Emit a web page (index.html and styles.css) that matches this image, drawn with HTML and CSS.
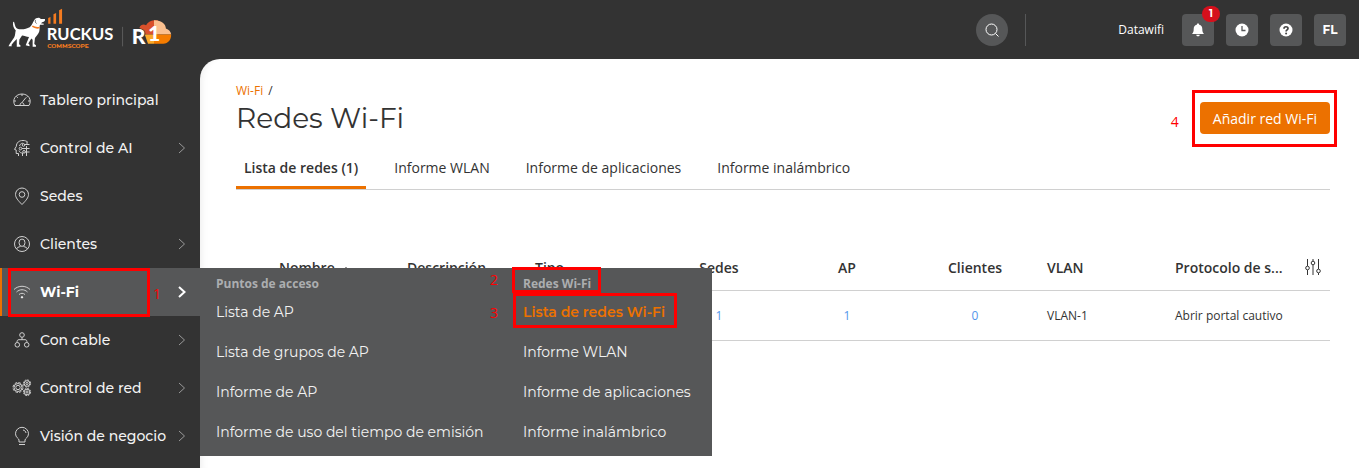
FILE: index.html
```html
<!DOCTYPE html>
<html lang="es">
<head>
    <meta charset="UTF-8">
    <meta name="viewport" content="width=device-width, initial-scale=1.0">
    <title>Redes Wi-Fi - RUCKUS One</title>
    <link rel="stylesheet" href="styles.css">
</head>
<body>
    <header class="topbar">
        <a href="#" class="logo" aria-label="RUCKUS One">
            <svg viewBox="24 24 496 124" width="165" height="41">
                <!-- perro -->
                <path fill="#fff" d="M38 66 C41 65 42 69 43 74 C45 84 50 89 58 88 C70 89 80 86 88 82 C95 77 97 68 102 60 C105 55 112 53 118 54 L122 57 L134 57 C136 61 133 66 126 67 L122 70 L131 72 L130 75 L119 75 C117 82 119 88 117 95 C114 104 107 109 104 115 L102 133 L107 137 L107 141 L97 141 L97 120 L93 116 L84 131 L88 136 L87 140 L76 137 L86 112 C78 111 72 108 65 107 L57 119 L56 134 L60 137 L60 141 L49 141 L49 118 L38 129 L33 136 L34 140 L24 140 L28 132 L41 113 C45 106 44 98 46 92 C40 86 36 75 38 66 Z"/>
                <path stroke="#333" stroke-width="2" fill="none" d="M106 60 C104 64 105 69 109 71"/>
                <path stroke="#f47b20" stroke-width="5" fill="none" d="M96 79 Q106 86 118 83"/>
                <path fill="#f47b20" d="M144 54 L151 51 V72 H144 Z M160 43 L168 39 V72 H160 Z M177 31 L186 26 V72 H177 Z"/>
                <text x="140" y="120" class="logo-name">RUCKUS</text>
                <circle cx="338" cy="88" r="2" fill="#ccc"/>
                <text x="141" y="144" class="logo-owner">COMMSCOPE</text>
                <path stroke="#5c5c5c" stroke-width="3" d="M369 81 V140"/>
                <!-- nube -->
                <path fill="#d9502b" d="M420 84 C423 75 432 72 440 76 C445 67 454 62 464 61 H476 V104 H440 Z"/>
                <path fill="#fbc08f" d="M464 61 C485 60 500 72 500 86 C509 89 515 96 516 104 H464 Z"/>
                <path fill="#f57c00" d="M464 104 H516 C516 120 507 131 492 132 H464 Z"/>
                <path fill="#fba928" d="M436 104 H464 V132 H446 Z"/>
                <text x="397" y="132" class="logo-r">R</text>
                <text x="446" y="123" class="logo-one">1</text>
            </svg>
        </a>
        <div class="tools">
            <button class="search" aria-label="Buscar">
                <svg viewBox="0 0 16 16" width="16" height="16" fill="none" stroke="#fff"><circle cx="7.500" cy="7.500" r="5.500"/><path d="M11.500 11.500l3 3"/></svg>
            </button>
            <span class="divider"></span>
            <span class="account">Datawifi</span>
            <button class="tool" aria-label="Alarmas">
                <svg viewBox="0 0 16 16" width="16" height="16" fill="#fff"><path d="M8 1.500c.8 0 1.200.5 1.200 1.200C11.400 3.200 12.300 5 12.300 7c0 2.500.5 3.500 1.700 5H2c1.200-1.500 1.700-2.500 1.700-5 0-2 .9-3.800 3.100-4.300 0-.7.400-1.200 1.200-1.200zM6.300 12.800h3.400c0 1-.7 1.500-1.700 1.500s-1.700-.5-1.700-1.500z"/></svg>
                <span class="badge">1</span>
            </button>
            <button class="tool" aria-label="Actividades">
                <svg viewBox="0 0 16 16" width="16" height="16"><circle cx="8" cy="8" r="6.500" fill="#fff"/><path d="M8 4v4.500h3.500" fill="none" stroke="#565758" stroke-width="1.300"/></svg>
            </button>
            <button class="tool" aria-label="Ayuda">
                <svg viewBox="0 0 16 16" width="16" height="16"><circle cx="8" cy="8" r="6.500" fill="#fff"/><path d="M6 6.700c0-2.600 4-2.500 4-.2 0 1.400-1.900 1.400-1.900 3" fill="none" stroke="#444" stroke-width="1.700"/><circle cx="8.100" cy="11.500" r="1" fill="#444"/></svg>
            </button>
            <button class="tool">FL</button>
        </div>
    </header>

    <div class="layout">
        <nav class="sidebar">
            <ul class="menu">
                <li>
                    <a href="#" class="menu-item">
                        <svg class="icon" viewBox="0 0 20 20"><path d="M3 15.500C-.5 9.500 4 4 10 4s10.500 5.500 7 11.500zM2 11h2M16 11h2M4.500 6.500l1.300 1.300M10 4v2M15.500 6.500l-.8.800M14 7.500l-4 5M8 15c0-3 4-3 4 0"/></svg>
                        Tablero principal
                    </a>
                </li>
                <li>
                    <a href="#" class="menu-item">
                        <svg class="icon" viewBox="0 0 20 20"><path d="M6.500 18v-2.500H4.200V12l-1.700-.6 1.800-3C4.500 4.500 7 2.500 11 2.500c2 0 3.500.6 4.500 1.500M10 10.500h7.500M12.500 6.500h5M13 14h4.500M10.500 18v-3M14.500 18V8M15 3.500v3M7.500 8c1-3 3-3 4-2.500M7 12.500c.5 2 2 2.500 3.500 2.500"/><circle cx="11.500" cy="7" r="1.300"/><circle cx="8.500" cy="10.500" r="1.300"/><circle cx="12" cy="13.800" r="1.300"/></svg>
                        Control de AI
                        <svg class="arrow" viewBox="0 0 8 12"><path d="M1 1l5.500 5L1 11"/></svg>
                    </a>
                </li>
                <li>
                    <a href="#" class="menu-item">
                        <svg class="icon" viewBox="0 0 20 20"><path d="M10 18.500C6 14.500 3.500 11.500 3.500 8.500a6.500 6.500 0 0 1 13 0c0 3-2.500 6-6.500 10z"/><circle cx="10" cy="8.500" r="2.800"/></svg>
                        Sedes
                    </a>
                </li>
                <li>
                    <a href="#" class="menu-item">
                        <svg class="icon" viewBox="0 0 20 20"><circle cx="10" cy="10" r="7.500"/><ellipse cx="10" cy="8.700" rx="3" ry="3.700"/><path d="M4.500 15c.5-1.500 2-2 4-2.500M15.500 15c-.5-1.500-2-2-4-2.500"/></svg>
                        Clientes
                        <svg class="arrow" viewBox="0 0 8 12"><path d="M1 1l5.500 5L1 11"/></svg>
                    </a>
                </li>
                <li class="active">
                    <a href="#" class="menu-item">
                        <svg class="icon" viewBox="0 0 20 20"><path d="M2 7.500c4.500-4.300 11.500-4.300 16 0M4.500 10c3.200-3 7.800-3 11 0M7 12.500c2-1.600 4-1.600 6 0"/><circle cx="10" cy="15.300" r=".7" fill="#fff" stroke="#fff"/></svg>
                        Wi-Fi
                        <svg class="arrow" viewBox="0 0 8 12"><path d="M1 1l5.500 5L1 11"/></svg>
                    </a>
                    <span class="mark mark-menu"></span>
                    <span class="step step-menu">1</span>

                    <div class="flyout">
                        <div class="flyout-col">
                            <h2>Puntos de acceso</h2>
                            <a href="#">Lista de AP</a>
                            <a href="#">Lista de grupos de AP</a>
                            <a href="#">Informe de AP</a>
                            <a href="#">Informe de uso del tiempo de emisión</a>
                        </div>
                        <div class="flyout-col">
                            <h2>Redes Wi-Fi<span class="mark mark-group"></span><span class="step step-group">2</span></h2>
                            <a href="#" class="selected">Lista de redes Wi-Fi<span class="mark mark-list"></span><span class="step step-list">3</span></a>
                            <a href="#">Informe WLAN</a>
                            <a href="#">Informe de aplicaciones</a>
                            <a href="#">Informe inalámbrico</a>
                        </div>
                    </div>
                </li>
                <li>
                    <a href="#" class="menu-item">
                        <svg class="icon" viewBox="0 0 20 20"><circle cx="10" cy="5" r="2.300"/><circle cx="5.300" cy="14.800" r="2.300"/><circle cx="14.700" cy="14.800" r="2.300"/><path d="M10 7.300v2.400M5 12.500c0-2 .5-2.800 2-2.800h6c1.500 0 2 .8 2 2.800"/></svg>
                        Con cable
                        <svg class="arrow" viewBox="0 0 8 12"><path d="M1 1l5.500 5L1 11"/></svg>
                    </a>
                </li>
                <li>
                    <a href="#" class="menu-item">
                        <svg class="icon" viewBox="0 0 20 20"><circle cx="6" cy="9.500" r="2.200"/><circle cx="6" cy="9.500" r="4" /><circle cx="6" cy="9.500" r="5" stroke-dasharray="2.600 1.300"/><circle cx="15" cy="5.500" r="1.100"/><circle cx="15" cy="5.500" r="2.800"/><circle cx="15" cy="5.500" r="3.600" stroke-dasharray="1.800 1"/><circle cx="15" cy="14" r="1.100"/><circle cx="15" cy="14" r="2.800"/><circle cx="15" cy="14" r="3.600" stroke-dasharray="1.800 1"/></svg>
                        Control de red
                        <svg class="arrow" viewBox="0 0 8 12"><path d="M1 1l5.500 5L1 11"/></svg>
                    </a>
                </li>
                <li>
                    <a href="#" class="menu-item">
                        <svg class="icon" viewBox="0 0 20 20"><path d="M7 16v-2c0-1.500-3.500-2.500-3.500-6.200a6.500 6.500 0 0 1 13 0c0 3.700-3.500 4.700-3.500 6.200v2zM7 18.500h6M11 4c1.800.3 2.800 1.500 3 3"/></svg>
                        Visión de negocio
                        <svg class="arrow" viewBox="0 0 8 12"><path d="M1 1l5.500 5L1 11"/></svg>
                    </a>
                </li>
            </ul>
        </nav>

        <main class="content">
            <div class="page-header">
                <div>
                    <div class="breadcrumb"><a href="#">Wi-Fi</a><span>/</span></div>
                    <h1>Redes Wi-Fi</h1>
                </div>
                <div class="action">
                    <button class="add-button">Añadir red Wi-Fi</button>
                    <span class="mark mark-action"></span>
                    <span class="step step-action">4</span>
                </div>
            </div>

            <div class="tabs">
                <a href="#" class="tab current">Lista de redes (1)</a>
                <a href="#" class="tab">Informe WLAN</a>
                <a href="#" class="tab">Informe de aplicaciones</a>
                <a href="#" class="tab">Informe inalámbrico</a>
            </div>

            <table class="networks">
                <colgroup>
                    <col class="col-edge"><col><col><col><col><col><col><col><col><col class="col-edge">
                </colgroup>
                <thead>
                    <tr>
                        <th></th>
                        <th>Nombre <svg class="sort" viewBox="0 0 8 5"><path d="M4 0l4 5H0z"/></svg></th>
                        <th>Descripción</th>
                        <th>Tipo</th>
                        <th class="num">Sedes</th>
                        <th class="num">AP</th>
                        <th class="num">Clientes</th>
                        <th>VLAN</th>
                        <th>Protocolo de s...</th>
                        <th class="settings">
                            <button aria-label="Columnas">
                                <svg viewBox="0 0 20 20" width="20" height="20" fill="none" stroke="#333"><path d="M4.500 2v7M4.500 13v5M10 2v2M10 8v10M15.500 2v10M15.500 16v2"/><circle cx="4.500" cy="11" r="1.800"/><circle cx="10" cy="6" r="1.800"/><circle cx="15.500" cy="14" r="1.800"/></svg>
                            </button>
                        </th>
                    </tr>
                </thead>
                <tbody>
                    <tr>
                        <td></td>
                        <td></td>
                        <td></td>
                        <td></td>
                        <td class="num"><a href="#">1</a></td>
                        <td class="num"><a href="#">1</a></td>
                        <td class="num"><a href="#">0</a></td>
                        <td>VLAN-1</td>
                        <td>Abrir portal cautivo</td>
                        <td></td>
                    </tr>
                </tbody>
            </table>
        </main>
    </div>
</body>
</html>
```
FILE: styles.css
```css
* {
    box-sizing: border-box;
}
body {
    margin: 0;
    min-height: 100vh;
    display: flex;
    flex-direction: column;
    background-color: #333333;
    color: #333333;
    font-family: 'Open Sans', sans-serif;
    font-size: 14px;
}
a {
    color: inherit;
    text-decoration: none;
}
button {
    padding: 0;
    border: none;
    font-family: inherit;
    cursor: pointer;
}
.topbar {
    height: 59px;
    padding: 0 13px 0 8px;
    display: flex;
    justify-content: space-between;
    align-items: center;
}
.logo {
    margin-bottom: 2px;
}
.logo svg {
    display: block;
}
.logo-name {
    fill: #ffffff;
    font: 700 50px Lato, sans-serif;
}
.logo-owner {
    fill: #f47b20;
    font: 700 18px Montserrat, Inter, sans-serif;
}
.logo-r, .logo-one {
    fill: #ffffff;
    font: 900 64px Lato, sans-serif;
}
.logo-r {
    stroke: #333333;
    stroke-width: 4px;
    paint-order: stroke;
}
.tools {
    display: flex;
    align-items: center;
    gap: 12px;
    color: #ffffff;
}
.search, .tool {
    width: 32px;
    height: 32px;
    display: flex;
    justify-content: center;
    align-items: center;
    background-color: #565758;
    color: #ffffff;
}
.search {
    border-radius: 50%;
}
.tool {
    position: relative;
    border-radius: 4px;
    font-family: Montserrat, Inter, sans-serif;
    font-size: 12px;
    font-weight: 700;
}
.divider {
    width: 1px;
    height: 32px;
    margin: 0 80px 0 5px;
    background-color: #565758;
}
.account {
    margin-right: 6px;
    font-size: 12px;
}
.badge {
    position: absolute;
    top: -8px;
    right: -6px;
    min-width: 18px;
    border-radius: 8px;
    background-color: #d5101c;
    font-size: 10px;
    line-height: 16px;
    text-align: center;
}
.layout {
    flex: 1;
    display: flex;
}
.sidebar {
    width: 200px;
    flex-shrink: 0;
}
.menu {
    margin: 0;
    padding: 17px 0 8px;
    list-style: none;
    color: #f2f2f2;
    font-family: Montserrat, Inter, sans-serif;
    font-size: 14px;
}
.menu li {
    position: relative;
}
.menu-item {
    height: 48px;
    padding: 0 14px 0 12px;
    display: flex;
    align-items: center;
    font-weight: 500;
}
.icon {
    width: 20px;
    height: 20px;
    margin-right: 8px;
    fill: none;
    stroke: #d0d0d0;
    stroke-width: 1;
}
.arrow {
    width: 8px;
    height: 12px;
    margin-left: auto;
    fill: none;
    stroke: #999999;
}
.active .menu-item {
    background-color: #565758;
    box-shadow: inset 2px 0 #ec7100;
    color: #ffffff;
    font-weight: 700;
}
.active .arrow {
    stroke: #ffffff;
    stroke-width: 2;
}
.flyout {
    position: absolute;
    z-index: 1;
    top: 0;
    left: 100%;
    width: 512px;
    padding: 8px 16px 4px;
    display: grid;
    grid-template-columns: 267px 1fr;
    gap: 40px;
    background-color: #565758;
    white-space: nowrap;
}
.flyout h2 {
    position: relative;
    margin: 0;
    color: #acaeb0;
    font-family: 'Open Sans', sans-serif;
    font-size: 12px;
    font-weight: 700;
    line-height: 16px;
}
.flyout a {
    position: relative;
    display: block;
    line-height: 40px;
}
.flyout .selected {
    color: #ec7100;
    font-weight: 600;
}
.content {
    flex: 1;
    padding: 24px 29px 24px 36px;
    border-top-left-radius: 20px;
    background-color: #ffffff;
    box-shadow: inset 8px 0 8px -8px rgba(0, 0, 0, 0.1);
}
.page-header {
    display: flex;
    justify-content: space-between;
    align-items: center;
}
.breadcrumb {
    display: flex;
    gap: 5px;
    font-size: 12px;
    line-height: 16px;
}
.breadcrumb a {
    color: #ec7100;
}
h1 {
    margin: 0;
    font-family: Montserrat, Inter, sans-serif;
    font-size: 28px;
    font-weight: 400;
    line-height: 38px;
}
.action {
    position: relative;
    margin-top: 16px;
}
.add-button {
    height: 32px;
    padding: 0 13px;
    border-radius: 4px;
    background-color: #ec7100;
    color: #ffffff;
    font-size: 14px;
}
.tabs {
    margin-top: 10px;
    display: flex;
    gap: 20px;
    border-bottom: 1px solid #d0d0d0;
}
.tab {
    height: 42px;
    padding: 0 8px;
    line-height: 42px;
}
.tab.current {
    box-shadow: inset 0 -3px #ec7100;
    font-weight: 600;
}
.networks {
    width: 100%;
    margin-top: 55px;
    table-layout: fixed;
    border-collapse: collapse;
}
.col-edge {
    width: 35px;
}
.networks th, .networks td {
    padding: 0 8px;
    border-bottom: 1px solid #d0d0d0;
    text-align: left;
    white-space: nowrap;
}
.networks th {
    height: 45px;
    font-weight: 600;
}
.networks td {
    height: 50px;
    font-size: 12px;
}
.networks .num {
    text-align: center;
}
.networks td a {
    color: #5496ea;
}
.networks .settings {
    padding: 0;
    text-align: center;
}
.settings button {
    display: block;
    margin: 0 auto;
    background: none;
}
.settings svg {
    display: block;
}
.sort {
    width: 8px;
    height: 5px;
    margin-left: 4px;
    vertical-align: middle;
}
.mark {
    position: absolute;
    border: 3px solid #ff0000;
    pointer-events: none;
}
.mark-menu {
    inset: 0 50px -1px 8px;
}
.mark-group {
    top: -9px;
    left: -11px;
    width: 89px;
    height: 26px;
}
.mark-list {
    top: 1px;
    left: -10px;
    width: 164px;
    height: 35px;
}
.mark-action {
    inset: -12px -7px -13px -8px;
}
.step {
    position: absolute;
    color: #ff0000;
    font-family: 'Open Sans', sans-serif;
    font-size: 14px;
    font-weight: 400;
    line-height: 20px;
}
.step-menu {
    top: 16px;
    left: 153px;
}
.step-group {
    top: -6px;
    left: -33px;
}
.step-list {
    top: 11px;
    left: -33px;
}
.step-action {
    top: 10px;
    left: -29px;
}
```
